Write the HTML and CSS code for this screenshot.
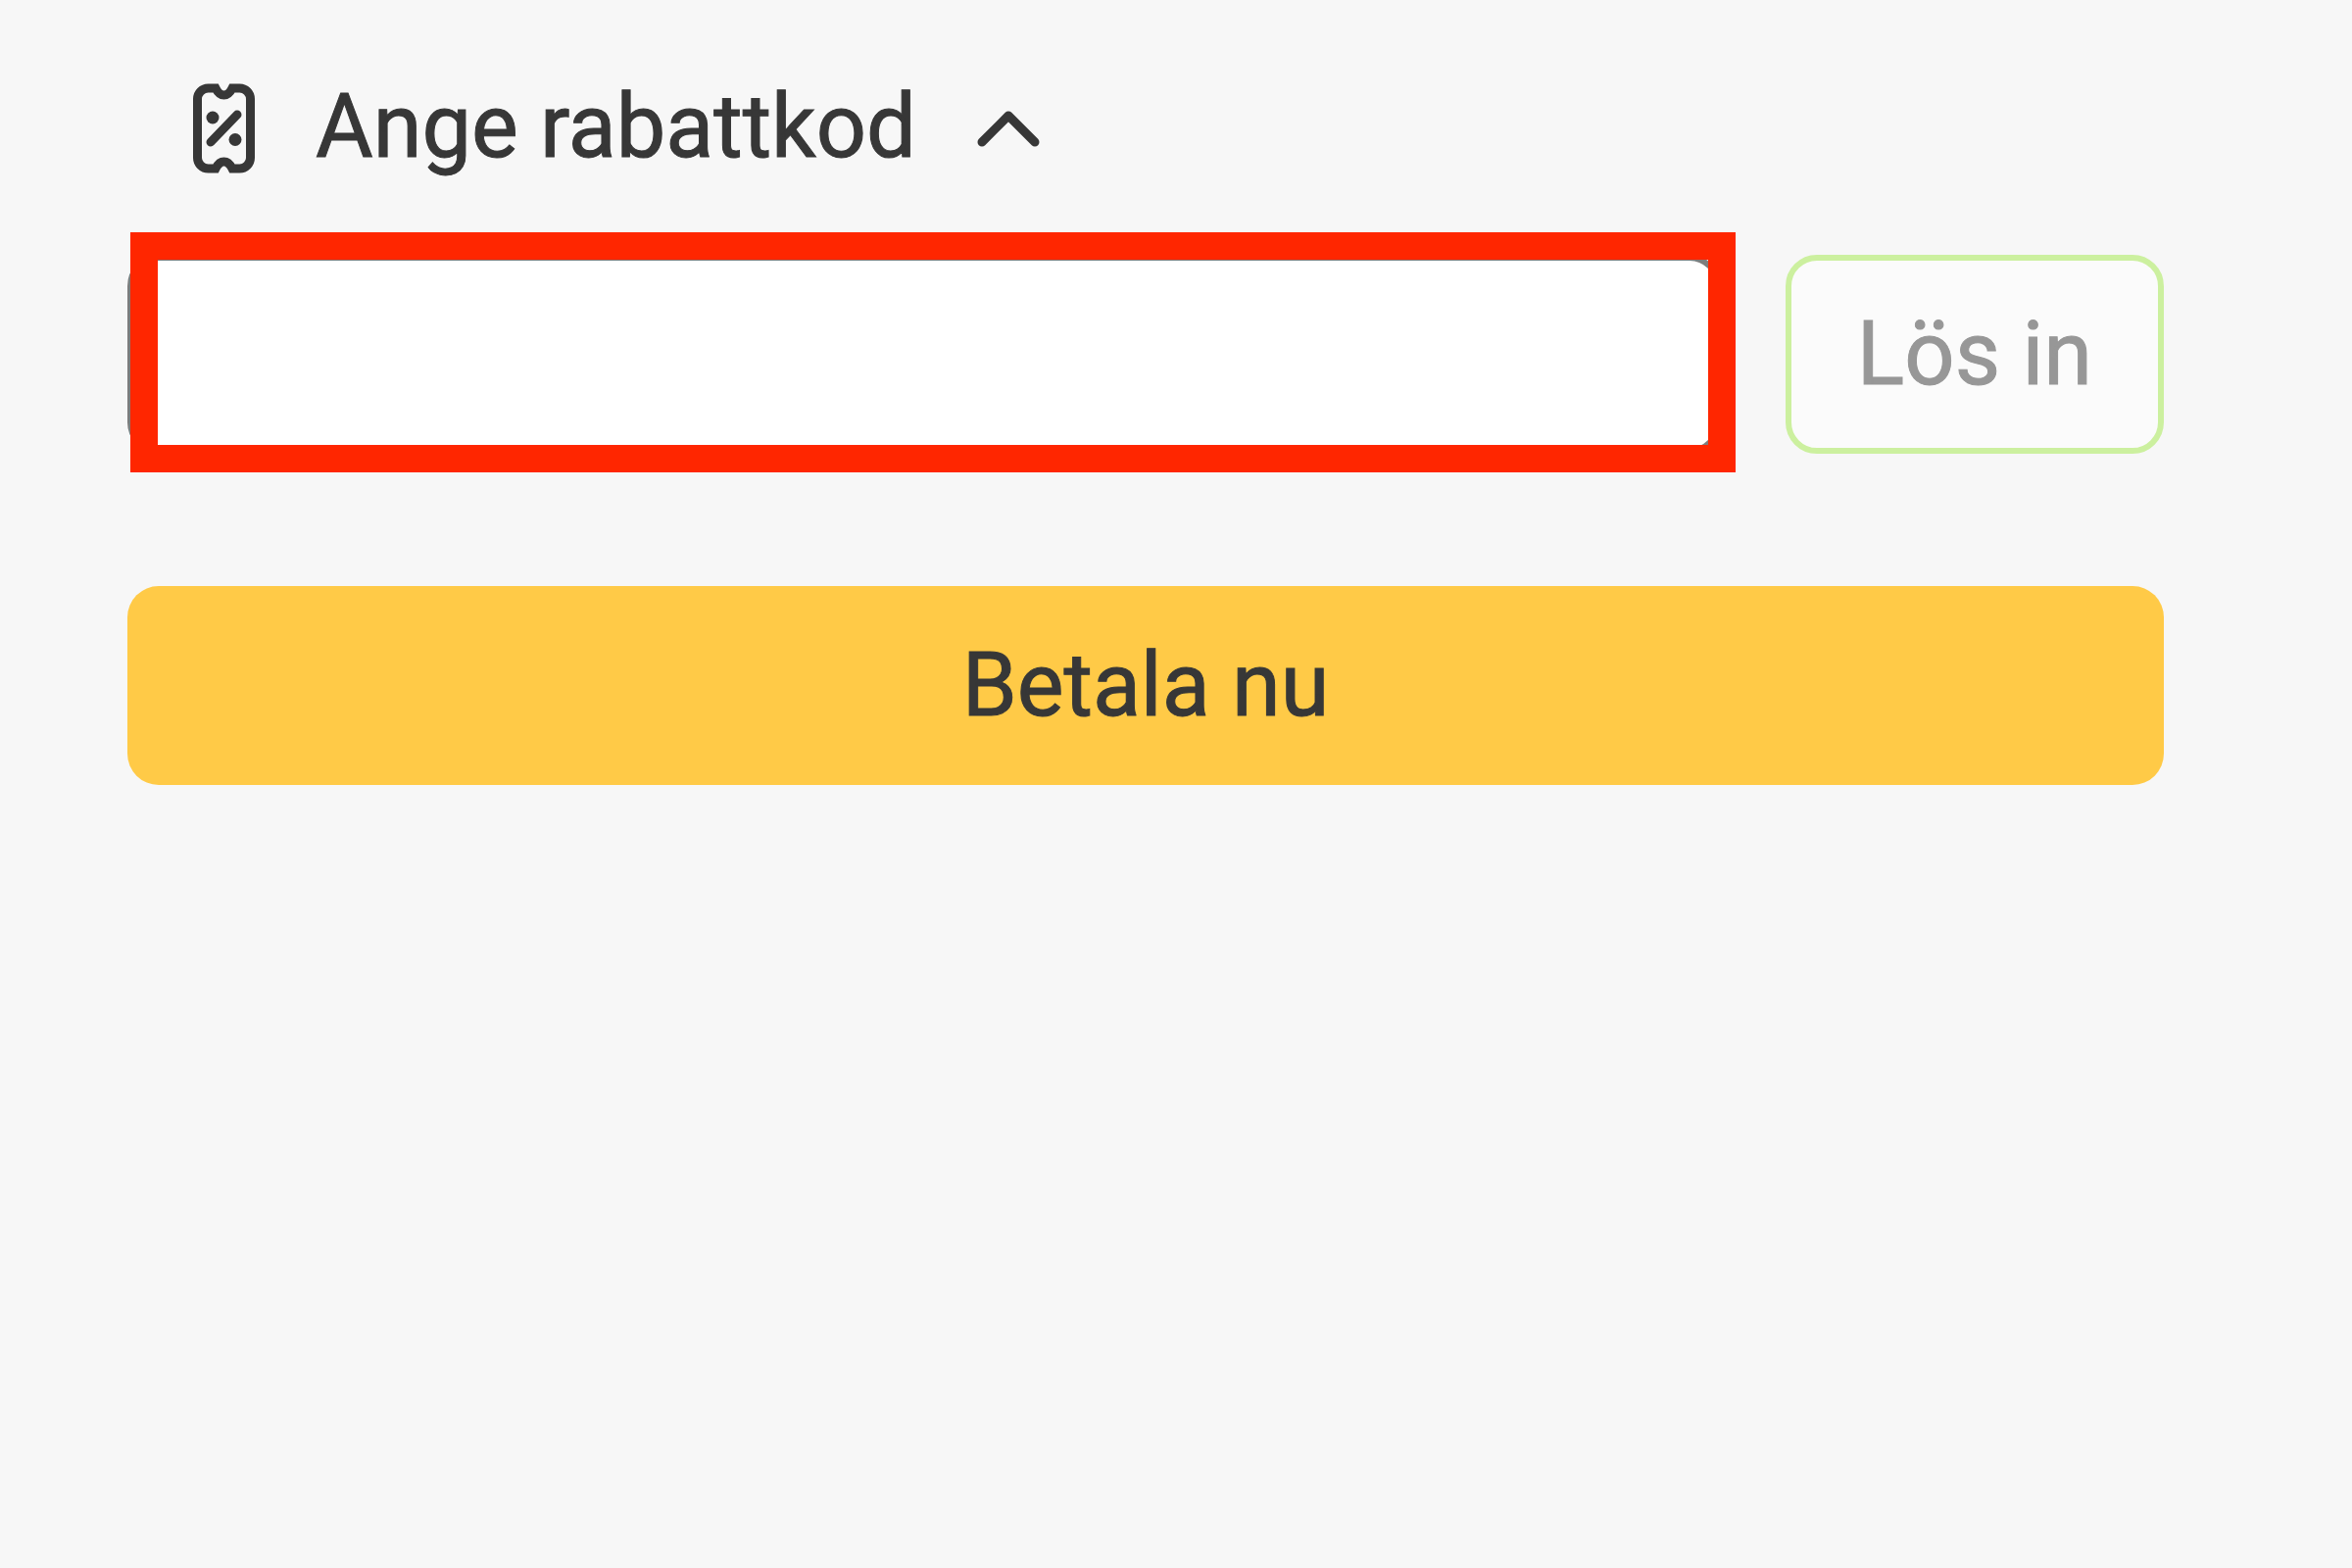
FILE: index.html
```html
<!DOCTYPE html>
<html lang="sv">
<head>
    <meta charset="UTF-8">
    <meta name="viewport" content="width=device-width, initial-scale=1.0">
    <title>Betalning</title>
    <link rel="stylesheet" href="styles.css">
</head>
<body>

    <form class="checkout">
        <button type="button" id="discount-toggle" class="discount-toggle" aria-expanded="true" aria-controls="discount-row">
            <svg class="ticket-icon" viewBox="0 -2 64 96" aria-hidden="true">
                <path class="line" d="M5.5 17A11 11 0 0 1 16.5 6H24C26 10 28.5 13 32.5 13S39 10 41 6H48.500A11 11 0 0 1 59.500 17V77A11 11 0 0 1 48.500 88H41C39 84 36.500 81 32.500 81S26 84 24 88H16.500A11 11 0 0 1 5.500 77Z"/>
                <path class="line round" d="M19 61L46 33"/>
                <circle cx="21" cy="36" r="6.5"/>
                <circle cx="44" cy="58.5" r="6.5"/>
            </svg>
            <span>Ange rabattkod</span>
            <svg class="chevron-icon" viewBox="0 0 64 48" aria-hidden="true">
                <path class="line round" d="M5 39L32 12L59 39"/>
            </svg>
        </button>

        <div id="discount-row" class="discount-row">
            <div class="code-field">
                <input type="text" class="code-input" aria-labelledby="discount-toggle">
                <div class="highlight"></div>
            </div>
            <button type="button" class="btn redeem-btn" disabled>Lös in</button>
        </div>

        <button type="submit" class="btn pay-btn">Betala nu</button>
    </form>

</body>
</html>
```
FILE: styles.css
```css
* {
    margin: 0;
    padding: 0;
    box-sizing: border-box;
}

body {
    font-family: Roboto, sans-serif;
    font-size: 90px;
    line-height: 108px;
    -webkit-text-stroke: 1px currentColor;
    background-color: #f7f7f7;
    color: #373737;
}

button, input {
    font: inherit;
    color: inherit;
}

.checkout {
    display: flex;
    flex-direction: column;
    padding: 76px 192px 76px 130px;
}

.discount-toggle {
    display: flex;
    align-items: center;
    align-self: flex-start;
    gap: 62px;
    padding-left: 66px;
    margin-bottom: 76px;
    background: none;
    border: none;
    cursor: pointer;
}

.ticket-icon {
    width: 64px;
    height: 96px;
    fill: currentColor;
}

.chevron-icon {
    width: 64px;
    height: 48px;
}

.line {
    fill: none;
    stroke: currentColor;
    stroke-width: 9px;
}

.round {
    stroke-linecap: round;
    stroke-linejoin: round;
}

.discount-row {
    display: flex;
    gap: 66px;
    margin-bottom: 135px;
}

.code-field {
    position: relative;
    flex: 1;
}

.code-input {
    display: block;
    width: 100%;
    height: 203px;
    padding: 0 67px;
    background-color: #ffffff;
    border: 6px solid #7d7d7d;
    border-radius: 32px;
}

/* red marker frame over the code field */
.highlight {
    position: absolute;
    top: -23px;
    right: -15px;
    bottom: -19px;
    left: 3px;
    border: 28px solid #ff2600;
    pointer-events: none;
}

.btn {
    height: 203px;
    border: none;
    border-radius: 32px;
    cursor: pointer;
}

.redeem-btn {
    padding: 0 67px;
    background-color: #fbfbfb;
    border: 6px solid #ccf09f;
    color: #979797;
    -webkit-text-stroke-color: #979797;
    cursor: default;
}

.pay-btn {
    background-color: #ffca47;
}
```
